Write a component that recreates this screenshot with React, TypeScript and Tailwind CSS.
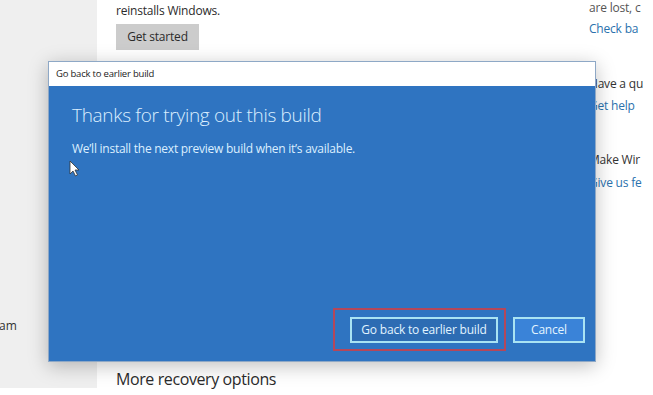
import React from 'react';

const font = { fontFamily: '"Open Sans", "Noto Sans", Arial, sans-serif' };

const Cursor = () => (
  <svg width="11" height="17" viewBox="0 0 11 17" className="ml-[-3px] mt-[2px]">
    <path d="M1 1 L1 14 L4 11 L6.5 16 L8.5 15 L6 10 L10 10 Z" fill="#ffffff" stroke="#333" strokeWidth="0.8" />
  </svg>
);

const App = () => {
  return (
    <div className="relative w-[653px] h-[395px] bg-white overflow-hidden flex text-[#2b2b2b]" style={font}>
      {/* left nav */}
      <div className="w-[97px] h-[388px] bg-[#efefef] shrink-0 flex flex-col">
        <div className="mt-[316px] text-[12px] leading-[20px] text-[#333] ml-[-1px]">am</div>
      </div>

      {/* main column */}
      <div className="w-[476px] ml-[19px] flex flex-col">
        <div className="text-[12px] leading-[20px] mt-[1px] tracking-[-0.2px]">reinstalls Windows.</div>
        <button className="mt-[3px] w-[83px] h-[26px] bg-[#cccccc] text-[12px] text-[#2b2b2b] tracking-[-0.2px]">Get started</button>
        <div className="mt-auto mb-[4px] text-[16px] leading-[24px] text-[#2b2b2b] tracking-[-0.4px]">More recovery options</div>
      </div>

      {/* right column */}
      <div className="ml-[-3px] mt-[-2px] flex flex-col text-[12px] leading-[20px] whitespace-nowrap tracking-[-0.2px]">
        <div className="text-[#555]">are lost, c</div>
        <div className="text-[#2a71ad] mt-[1px]">Check ba</div>
        <div className="mt-[35px] text-[#333]">Have a qu</div>
        <div className="text-[#2a71ad] mt-[2px]">Get help</div>
        <div className="mt-[34px] text-[#333]">Make Wir</div>
        <div className="text-[#2a71ad] mt-[3px]">Give us fe</div>
      </div>

      {/* dialog */}
      <div className="absolute left-[48px] top-[61px] w-[548px] h-[301px] flex flex-col border border-[#8ea8c6] shadow-[0_4px_18px_rgba(0,0,0,0.25)]">
        <div className="h-[24px] bg-white flex items-center px-[7px] text-[9.5px] text-[#222] tracking-[-0.2px]">Go back to earlier build</div>
        <div className="flex-1 bg-[#2f74c1] flex flex-col pl-[23px] pr-[10px] pb-[10px] text-[#dcefff]">
          <div className="mt-[15px] text-[19px] leading-[28px] font-light tracking-[-0.3px]">Thanks for trying out this build</div>
          <div className="mt-[11px] text-[12px] leading-[18px] tracking-[-0.25px]">We’ll install the next preview build when it’s available.</div>
          <Cursor />
          <div className="mt-auto flex justify-end items-center">
            <div className="border-2 border-[#b4475a] pl-[15px] pr-[6px] py-[6px]">
              <button className="h-[26px] w-[148px] border-2 border-[#a9e3f3] bg-[#2d6cb3] text-[12px] text-[#e2f4ff] tracking-[-0.2px]">Go back to earlier build</button>
            </div>
            <button className="ml-[7px] h-[26px] w-[72px] border-2 border-[#a9e3f3] bg-[#3a83d8] text-[12px] text-[#e2f4ff] tracking-[-0.2px]">Cancel</button>
          </div>
        </div>
      </div>
    </div>
  );
};

export default App;
